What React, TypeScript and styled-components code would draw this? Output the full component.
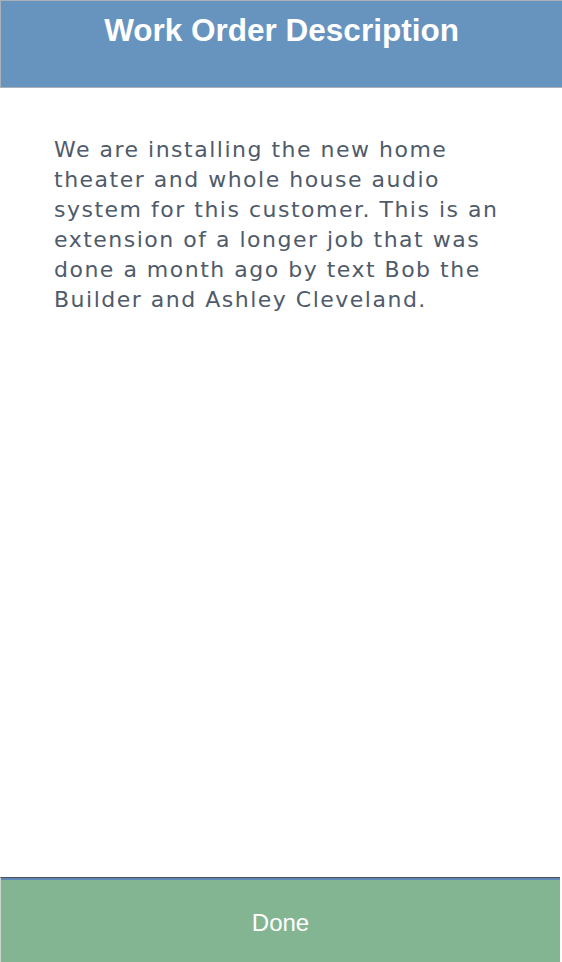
import React from 'react';
import styled, { createGlobalStyle } from 'styled-components';

const GlobalStyle = createGlobalStyle`
  html, body {
    margin: 0;
    padding: 0;
    background: #fff;
  }
  #root {
    height: 962px;
  }
`;

const App: React.FC = () => (
  <>
    <GlobalStyle />
    <Screen>
      <Header>
        <Title>Work Order Description</Title>
      </Header>
      <Content>
        <Description>
          We are installing the new home theater and whole house audio system
          for this customer. This is an extension of a longer job that was done
          a month ago by text Bob the Builder and Ashley Cleveland.
        </Description>
      </Content>
      <Footer>
        <DoneButton>Done</DoneButton>
      </Footer>
    </Screen>
  </>
);

const Screen = styled.div`
  height: 962px;
  display: flex;
  flex-direction: column;
  background: #fff;
`;

const Header = styled.header`
  height: 88px;
  box-sizing: border-box;
  background-color: #6794bf;
  border-top: 1px solid #a9b0b8;
  border-left: 1px solid #a9b0b8;
  border-bottom: 1px solid #a9b0b8;
  display: flex;
  justify-content: center;
  padding-top: 11px;
`;

const Title = styled.h1`
  margin: 0;
  font-family: 'Liberation Sans', Arial, sans-serif;
  font-weight: bold;
  font-size: 31.5px;
  line-height: 37px;
  color: #fff;
`;

const Content = styled.main`
  flex: 1;
  padding: 47px 0 0 54px;
`;

const Description = styled.p`
  margin: 0;
  width: 464px;
  font-family: 'DejaVu Sans', Verdana, sans-serif;
  font-size: 22px;
  letter-spacing: 1.5px;
  line-height: 30px;
  color: #4f5b6b;
`;

const Footer = styled.footer`
  height: 85px;
  box-sizing: border-box;
  margin-right: 2px;
  border-top: 1px solid #4a5058;
  border-left: 1px solid #c9d3cc;
  display: flex;
  flex-direction: column;
  &::before {
    content: '';
    height: 2px;
    background: #5f87b6;
  }
`;

const DoneButton = styled.button`
  flex: 1;
  border: none;
  background-color: #84b593;
  color: #fff;
  font-family: 'Liberation Sans', Arial, sans-serif;
  font-size: 24px;
  padding: 4px 0 0;
  cursor: pointer;
`;

export default App;
